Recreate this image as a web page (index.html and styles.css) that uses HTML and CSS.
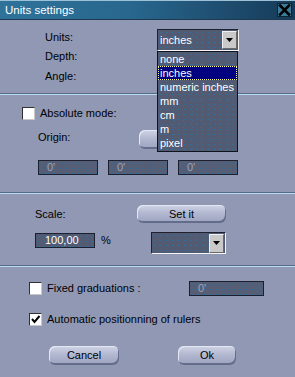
FILE: index.html
```html
<!DOCTYPE html>
<html>
<head>
<meta charset="utf-8">
<link rel="stylesheet" href="styles.css">
</head>
<body>
<div class="dialog">
  <div class="titlebar">
    <span class="title">Units settings</span>
    <span class="close"><svg width="13" height="12" viewBox="0 0 13 12"><path d="M2 1.5 L11 10.5 M11 1.5 L2 10.5" stroke="#000" stroke-width="2.6" stroke-linecap="square"/></svg></span>
  </div>

  <div class="sec sec-units">
    <div class="row row-units">
      <span class="lbl lbl-units">Units:</span>
      <div class="select sel-units">
        <span class="val">inches</span>
        <span class="arrow"><svg width="7" height="4" viewBox="0 0 7 4"><path d="M0 0 H7 L3.5 4 Z" fill="#000"/></svg></span>
      </div>
    </div>
    <div class="row row-depth"><span class="lbl">Depth:</span></div>
    <div class="row row-angle"><span class="lbl">Angle:</span></div>
  </div>

  <div class="sep"></div>

  <div class="sec sec-abs">
    <div class="row row-check row-abs">
      <span class="check"></span>
      <span class="lbl">Absolute mode:</span>
    </div>
    <div class="row row-origin">
      <span class="lbl lbl-origin">Origin:</span>
      <span class="btn btn-hidden"></span>
    </div>
    <div class="row row-fields">
      <span class="field field-dis">0'</span>
      <span class="field field-dis">0'</span>
      <span class="field field-dis">0'</span>
    </div>
  </div>

  <div class="sep"></div>

  <div class="sec sec-scale">
    <div class="row row-scale">
      <span class="lbl lbl-scale">Scale:</span>
      <span class="btn btn-set">Set it</span>
    </div>
    <div class="row row-scalev">
      <span class="field field-scale">100,00</span>
      <span class="pct">%</span>
      <div class="select sel-scale">
        <span class="val"></span>
        <span class="arrow"><svg width="7" height="4" viewBox="0 0 7 4"><path d="M0 0 H7 L3.5 4 Z" fill="#000"/></svg></span>
      </div>
    </div>
  </div>

  <div class="sep"></div>

  <div class="sec sec-grad">
    <div class="row row-check row-fixed">
      <span class="check"></span>
      <span class="lbl lbl-fixed">Fixed graduations :</span>
      <span class="field field-dis field-grad">0'</span>
    </div>
    <div class="row row-check row-auto">
      <span class="check checked"><svg width="11" height="11" viewBox="0 0 11 11"><path d="M2 5 L4.5 8 L9.5 2" fill="none" stroke="#000" stroke-width="2"/></svg></span>
      <span class="lbl">Automatic positionning of rulers</span>
    </div>
    <div class="row row-buttons">
      <span class="btn btn-cancel">Cancel</span>
      <span class="btn btn-ok">Ok</span>
    </div>
  </div>

  <ul class="dropdown">
    <li>none</li>
    <li class="sel">inches</li>
    <li>numeric inches</li>
    <li>mm</li>
    <li>cm</li>
    <li>m</li>
    <li>pixel</li>
  </ul>
</div>
</body>
</html>
```

FILE: styles.css
```css
* { box-sizing: border-box; margin: 0; padding: 0; }
html, body { width: 295px; height: 377px; overflow: hidden; }
body {
  background: #9198b4;
  font: 11px "Liberation Sans", Arial, sans-serif;
  color: #000;
}
.dialog { position: relative; width: 295px; height: 377px; }

.titlebar {
  height: 20px;
  display: flex;
  align-items: center;
  justify-content: space-between;
  padding: 0 3px 0 5px;
  background: linear-gradient(90deg, #2f739a 0%, #28668d 45%, #163a58 100%);
  border-top: 1px solid #9cc0d6;
  border-bottom: 1px solid #1d3a52;
  color: #fff;
  line-height: 13px;
}
.title { font-size: 11.5px; }
.close {
  width: 15px; height: 14px;
  background: #3b7b99;
  border: 1px solid #0c2434;
  display: flex; align-items: center; justify-content: center;
}

.lbl { line-height: 13px; white-space: nowrap; }
.row { display: flex; }
.sec { display: flow-root; }

.sep {
  height: 2px;
  background: linear-gradient(#59698a 50%, #b6dced 50%);
}

/* noisy dark field */
.field, .select, .dropdown {
  background-color: #535b73;
  background-image:
    radial-gradient(circle, #2f6d9c 0.7px, transparent 1px),
    radial-gradient(circle, #3b6e98 0.6px, transparent 1px);
  background-size: 6px 5px, 9px 7px;
  background-position: 0 0, 3px 2px;
}

/* section 1 */
.sec-units { height: 73px; padding-top: 9px; }
.row-units { height: 22px; padding-left: 45px; }
.lbl-units { width: 112px; margin-top: 2px; }
.select {
  position: relative;
  border-style: solid;
  border-width: 1px;
  border-color: #1c2230 #f4f4f4 #f4f4f4 #1c2230;
  display: flex;
  align-items: center;
  color: #fff;
}
.sel-units { width: 82px; height: 22px; padding-left: 2px; }
.select .val { flex: 1; line-height: 13px; }
.arrow {
  width: 15px; height: 18px;
  margin-right: 1px;
  background: #c9c9c9;
  border-style: solid; border-width: 1px;
  border-color: #f0f0f0 #6a6a6a #6a6a6a #f0f0f0;
  display: flex; align-items: center; justify-content: center;
}
.row-depth { margin-top: -1px; padding-left: 45px; }
.row-angle { margin-top: 7px; padding-left: 45px; }

/* dropdown overlay */
.dropdown {
  position: absolute;
  left: 157px; top: 51px;
  width: 81px; height: 101px;
  border: 1px solid #0e1420;
  list-style: none;
  color: #fff;
  padding: 0;
}
.dropdown li { height: 14px; line-height: 14px; padding-left: 2px; white-space: nowrap; }
.dropdown li.sel {
  background: #000080;
  outline: 1px dotted #ffff90;
  outline-offset: -1px;
}

/* section 2 */
.sec-abs { height: 97px; }
.row-check { align-items: center; }
.check {
  width: 13px; height: 13px;
  background: #fff;
  border-style: solid; border-width: 1px;
  border-color: #303030 #c8c8c8 #c8c8c8 #303030;
  display: flex; align-items: center; justify-content: center;
}
.row-check .lbl { margin-left: 5px; }
.row-abs { margin-top: 12px; height: 13px; padding-left: 22px; }
.row-origin { margin-top: 10px; height: 19px; padding-left: 38px; }
.lbl-origin { width: 101px; margin-top: 1px; }
.row-fields { margin-top: 11px; height: 15px; padding-left: 38px; gap: 10px; }
.field {
  height: 15px;
  border: 1px solid #1a2030;
  line-height: 13px;
  padding-left: 8px;
  color: #fff;
}
.row-fields .field { width: 60px; }
.field-dis { color: #9ba3b6; background-color: #565e76; }

/* buttons */
.btn {
  display: flex; align-items: center; justify-content: center;
  border-radius: 6px;
  background: linear-gradient(#d0d4e6 0%, #b2b8d0 45%, #9ca2be 100%);
  box-shadow: inset -1px -2px 0 #646c8c, inset 1px 1px 0 #e4e8f4;
  line-height: 13px;
}
.btn-hidden { width: 89px; height: 19px; }

/* section 3 */
.sec-scale { height: 71px; }
.row-scale { margin-top: 11px; height: 18px; padding-left: 35px; align-items: center; }
.lbl-scale { width: 102px; }
.btn-set { width: 89px; height: 18px; }
.row-scalev { margin-top: 9px; height: 22px; padding-left: 35px; }
.field-scale { width: 60px; margin-top: 1px; padding-left: 9px; }
.pct { line-height: 13px; margin-left: 6px; margin-top: 2px; width: 50px; }
.sel-scale { width: 75px; height: 22px; justify-content: flex-end; }
.sel-scale .arrow { height: 19px; }

/* section 4 */
.sec-grad { height: 110px; }
.row-fixed { margin-top: 14px; height: 15px; padding-left: 29px; }
.lbl-fixed { width: 142px; }
.field-grad { width: 75px; padding-left: 8px; }
.row-auto { margin-top: 17px; height: 13px; padding-left: 29px; }
.row-buttons { margin-top: 20px; height: 19px; padding-left: 49px; }
.btn-cancel { width: 70px; height: 19px; }
.btn-ok { width: 58px; height: 19px; margin-left: 59px; }
```
